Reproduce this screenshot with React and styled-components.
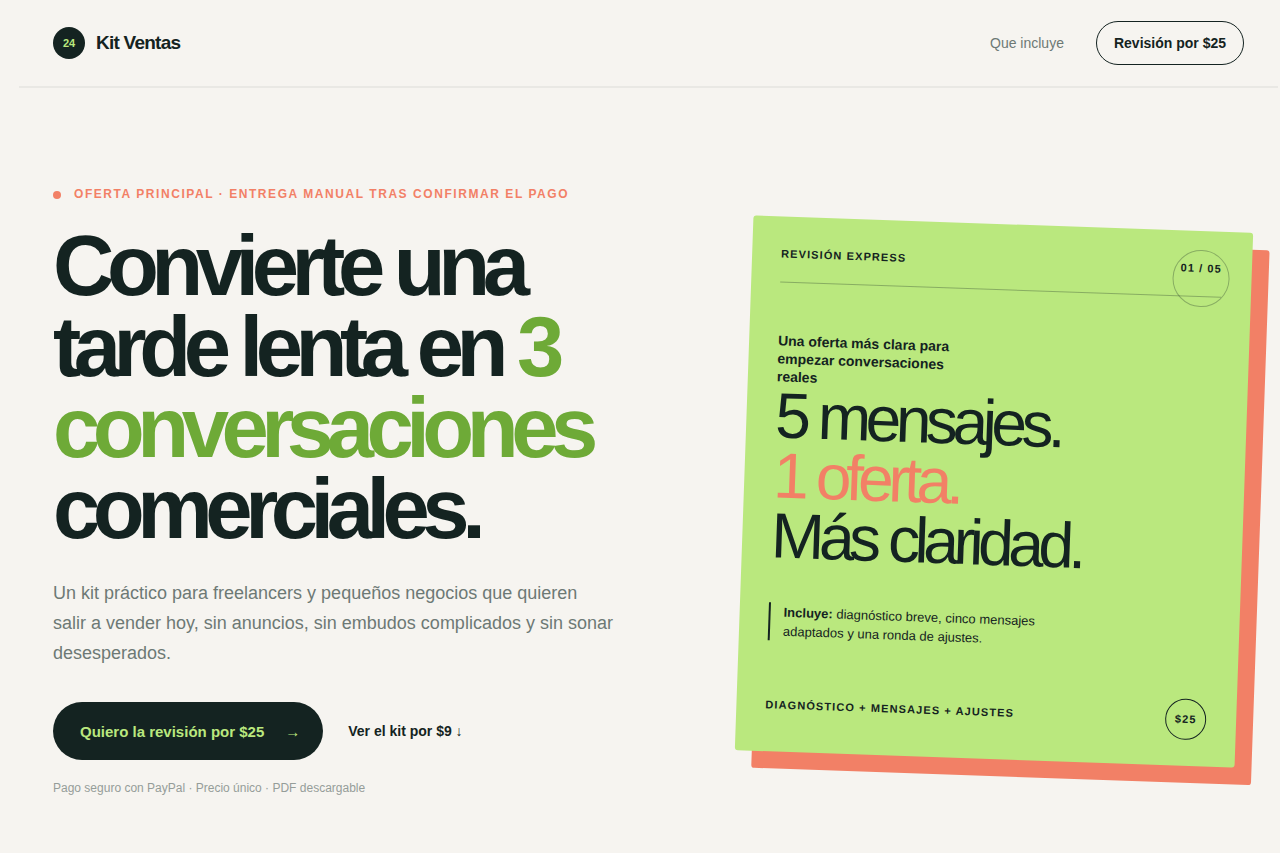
import React from "react";
import styled, { createGlobalStyle } from "styled-components";

const ink = "#142321";
const lime = "#bae87e";
const coral = "#f28066";
const muted = "#6d7975";

const GlobalStyle = createGlobalStyle`
  *, *::before {
    box-sizing: border-box;
  }
  body {
    margin: 0;
    background: #f6f4f0;
    color: ${ink};
    font-family: "Liberation Sans", Arial, sans-serif;
    overflow-x: hidden;
  }
  a {
    color: inherit;
    text-decoration: none;
  }
  h1, h2, p {
    margin: 0;
  }
`;

const Page = styled.div`
  padding: 0 2px 0 19px;
`;

const Header = styled.header`
  display: flex;
  align-items: center;
  justify-content: space-between;
  padding: 21px 34px;
  border-bottom: 2px solid #e9e8e4;
`;

const Brand = styled.a`
  display: flex;
  align-items: center;
  gap: 11px;
  font-size: 19px;
  font-weight: bold;
  letter-spacing: -0.04em;
`;

const BrandMark = styled.span`
  display: grid;
  place-items: center;
  width: 32px;
  height: 32px;
  border-radius: 50%;
  background: ${ink};
  color: ${lime};
  font-size: 11px;
  letter-spacing: 0;
`;

const Nav = styled.nav`
  display: flex;
  align-items: center;
  gap: 32px;
  font-size: 14px;
`;

const NavLink = styled.a`
  color: ${muted};
`;

const NavButton = styled.a`
  padding: 13px 17px;
  border: 1px solid ${ink};
  border-radius: 22px;
  line-height: 16px;
  font-weight: bold;
`;

const Hero = styled.main`
  display: grid;
  grid-template-columns: 1.23fr 1fr;
  gap: 76px;
  align-items: center;
  padding: 100px 34px 56px;

  @media (max-width: 1000px) {
    grid-template-columns: 1fr;
  }
`;

const Eyebrow = styled.p`
  display: flex;
  align-items: center;
  gap: 13px;
  margin-bottom: 24px;
  color: ${coral};
  font-size: 12px;
  line-height: 13px;
  font-weight: bold;
  letter-spacing: 0.13em;
  text-transform: uppercase;

  &::before {
    content: "";
    width: 8px;
    height: 8px;
    border-radius: 50%;
    background: ${coral};
  }
`;

const Title = styled.h1`
  margin-bottom: 29px;
  font-size: 85px;
  line-height: 81px;
  letter-spacing: -0.088em;

  em {
    color: #6eaa37;
    font-style: normal;
  }
`;

const Lead = styled.p`
  max-width: 570px;
  margin-bottom: 34px;
  color: ${muted};
  font-size: 18px;
  line-height: 30px;
`;

const Actions = styled.div`
  display: flex;
  flex-wrap: wrap;
  align-items: center;
  gap: 25px;
  margin-bottom: 22px;
`;

const PrimaryLink = styled.a`
  display: flex;
  align-items: center;
  gap: 21px;
  height: 58px;
  padding: 0 23px 0 27px;
  border-radius: 29px;
  background: ${ink};
  color: ${lime};
  font-size: 15px;
  font-weight: bold;
`;

const TextLink = styled.a`
  font-size: 14px;
  font-weight: bold;
`;

const Note = styled.p`
  color: #959d99;
  font-size: 12px;
  line-height: 13px;
`;

const Card = styled.article`
  position: relative;
  display: flex;
  flex-direction: column;
  min-height: 535px;
  padding: 31px 30px 26px 29px;
  border-radius: 3px;
  background: ${lime};
  box-shadow: 17px 17px 0 ${coral};
  transform: rotate(2deg);

  &::before {
    content: "";
    position: absolute;
    top: 19px;
    right: 22px;
    width: 57px;
    height: 57px;
    border: 1px solid rgba(20, 35, 33, 0.3);
    border-radius: 50%;
  }
`;

const CardRow = styled.div`
  display: flex;
  align-items: center;
  justify-content: space-between;
  font-size: 11px;
  line-height: 13px;
  font-weight: bold;
  letter-spacing: 0.1em;
  text-transform: uppercase;
`;

const CardHeader = styled(CardRow)`
  margin-bottom: 49px;
  padding-bottom: 21px;
  border-bottom: 1px solid rgba(20, 35, 33, 0.3);
`;

const CardFooter = styled(CardRow)`
  margin-top: auto;
`;

const CardIntro = styled.p`
  max-width: 180px;
  font-size: 14px;
  line-height: 18px;
  font-weight: bold;
`;

const CardTitle = styled.h2`
  margin-bottom: 37px;
  font-size: 64px;
  line-height: 60px;
  font-weight: normal;
  letter-spacing: -0.085em;

  span {
    display: block;
  }
`;

const Accent = styled.span`
  color: ${coral};
`;

const Includes = styled.p`
  max-width: 280px;
  padding-left: 13px;
  border-left: 2px solid ${ink};
  font-size: 13px;
  line-height: 19px;
`;

const Price = styled.span`
  display: grid;
  place-items: center;
  width: 41px;
  height: 41px;
  border: 1px solid ${ink};
  border-radius: 50%;
`;

function OfferCard() {
  return (
    <Card>
      <CardHeader>
        <span>Revisión express</span>
        <span>01 / 05</span>
      </CardHeader>
      <CardIntro>Una oferta más clara para empezar conversaciones reales</CardIntro>
      <CardTitle>
        <span>5 mensajes.</span>
        <Accent>1 oferta.</Accent>
        <span>Más claridad.</span>
      </CardTitle>
      <Includes>
        <strong>Incluye:</strong> diagnóstico breve, cinco mensajes adaptados y
        una ronda de ajustes.
      </Includes>
      <CardFooter>
        <span>Diagnóstico + mensajes + ajustes</span>
        <Price>$25</Price>
      </CardFooter>
    </Card>
  );
}

export default function App() {
  return (
    <Page>
      <GlobalStyle />
      <Header>
        <Brand href="#">
          <BrandMark>24</BrandMark>
          Kit Ventas
        </Brand>
        <Nav>
          <NavLink href="#incluye">Que incluye</NavLink>
          <NavButton href="#revision">Revisión por $25</NavButton>
        </Nav>
      </Header>
      <Hero>
        <section>
          <Eyebrow>
            Oferta principal · Entrega manual tras confirmar el pago
          </Eyebrow>
          <Title>
            Convierte una tarde lenta en <em>3 conversaciones</em> comerciales.
          </Title>
          <Lead>
            Un kit práctico para freelancers y pequeños negocios que quieren
            <br />
            salir a vender hoy, sin anuncios, sin embudos complicados y sin
            sonar desesperados.
          </Lead>
          <Actions>
            <PrimaryLink href="#revision">
              Quiero la revisión por $25 <span>→</span>
            </PrimaryLink>
            <TextLink href="#kit">Ver el kit por $9 ↓</TextLink>
          </Actions>
          <Note>Pago seguro con PayPal · Precio único · PDF descargable</Note>
        </section>
        <OfferCard />
      </Hero>
    </Page>
  );
}
